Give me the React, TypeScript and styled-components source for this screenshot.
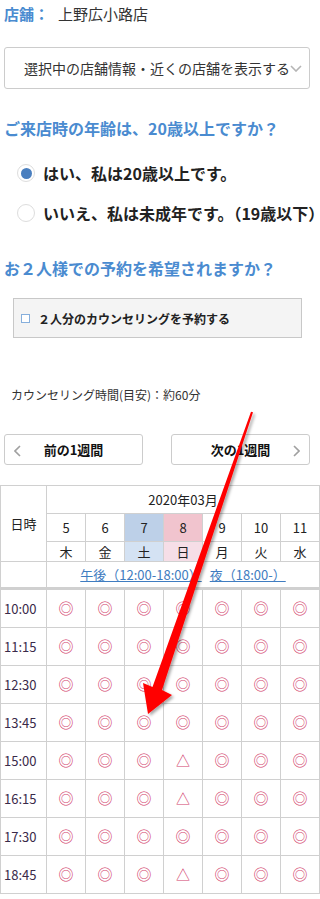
import React from "react";
import styled, { createGlobalStyle } from "styled-components";

const GlobalStyle = createGlobalStyle`
  html, body {
    margin: 0;
    padding: 0;
    background: #fff;
    overflow-x: hidden;
  }
  body {
    font-family: "Noto Sans CJK JP", "Noto Sans", sans-serif;
    color: #333;
  }
`;

const Page = styled.div`
  position: relative;
  width: 320px;
  overflow: hidden;
  padding-bottom: 4px;
`;

const StoreLine = styled.div`
  margin: 4px 0 0 4px;
  font-size: 15px;
  line-height: 20px;
  display: flex;
  gap: 9px;
`;

const StoreLabel = styled.span`
  color: #4a8bd0;
  font-weight: bold;
`;

const StoreName = styled.span`
  color: #333;
`;

const SelectBox = styled.div`
  margin: 23px 0 0 4px;
  width: 306px;
  height: 42px;
  box-sizing: border-box;
  border: 1px solid #ccc;
  border-radius: 3px;
  display: flex;
  align-items: center;
  padding-left: 19px;
  font-size: 14px;
  color: #333;
  white-space: nowrap;
`;

const Question = styled.h2<{ $top: number }>`
  margin: ${(p) => p.$top}px 0 0 4px;
  font-size: 16px;
  line-height: 24px;
  font-weight: bold;
  color: #4a8bd0;
  white-space: nowrap;
`;

const RadioList = styled.div`
  margin: 21px 0 0 17px;
  display: flex;
  flex-direction: column;
  gap: 16px;
`;

const RadioRow = styled.label`
  display: flex;
  align-items: center;
  gap: 8px;
  height: 24px;
  font-size: 16px;
  font-weight: bold;
  color: #222;
  white-space: nowrap;
`;

const RadioDot = styled.span<{ $checked?: boolean }>`
  flex: none;
  width: 18px;
  height: 18px;
  box-sizing: border-box;
  border-radius: 50%;
  border: 1px solid #ddd;
  background: #fff;
  display: flex;
  align-items: center;
  justify-content: center;
  &::after {
    content: "";
    width: 11px;
    height: 11px;
    border-radius: 50%;
    background: ${(p) => (p.$checked ? "#4a7fbf" : "transparent")};
  }
`;

const CheckPanel = styled.div`
  margin: 18px 0 0 13px;
  width: 289px;
  height: 40px;
  box-sizing: border-box;
  border: 1px solid #c8c8c8;
  background: #f4f4f4;
  display: flex;
  align-items: center;
  padding-left: 7px;
  gap: 8px;
  font-size: 12px;
  font-weight: bold;
  color: #222;
`;

const CheckSquare = styled.span`
  width: 9px;
  height: 9px;
  box-sizing: border-box;
  border: 1px solid #86afdc;
  background: #fff;
`;

const Duration = styled.p`
  margin: 48px 0 0 11px;
  font-size: 12px;
  line-height: 18px;
  color: #333;
`;

const WeekNav = styled.div`
  margin: 30px 10px 0 4px;
  display: flex;
  justify-content: space-between;
`;

const WeekButton = styled.button<{ $dir: "prev" | "next" }>`
  position: relative;
  width: 139px;
  height: 31px;
  box-sizing: border-box;
  border: 1px solid #ccc;
  border-radius: 3px;
  background: #fff;
  font-family: inherit;
  font-size: 13px;
  font-weight: bold;
  color: #111;
  padding: 0;
  display: flex;
  align-items: center;
  justify-content: center;
  svg {
    position: absolute;
    top: 10px;
    ${(p) => (p.$dir === "prev" ? "left: 9px;" : "right: 9px;")}
  }
`;

const Calendar = styled.table`
  margin-top: 20px;
  width: 320px;
  border-collapse: collapse;
  table-layout: fixed;
  font-size: 13px;
  color: #222;
`;

const Cell = styled.td<{ $bg?: string; $h: number }>`
  border: 1px solid #d0d0d0;
  height: ${(p) => p.$h}px;
  padding: 0;
  text-align: center;
  vertical-align: middle;
  background: ${(p) => p.$bg || "#fff"};
  line-height: 16px;
`;

const LinkRowCell = styled(Cell)`
  border-bottom: 3px solid #d0d0d0;
`;

const PeriodLink = styled.a`
  color: #3f7cc0;
  text-decoration: underline;
  margin: 0 4px;
`;

const TimeCell = styled(Cell)`
  text-align: left;
  padding-left: 3px;
  color: #3a2a4a;
`;

const Mark = styled.span<{ $tri?: boolean }>`
  color: #d2406c;
  font-size: ${(p) => (p.$tri ? "14px" : "15px")};
`;

const ArrowLayer = styled.svg`
  position: absolute;
  left: 0;
  top: 0;
  pointer-events: none;
`;

const days = [
  { d: "5", w: "木" },
  { d: "6", w: "金" },
  { d: "7", w: "土", bg: "#bdd0e8", wbg: "#d4e2f3" },
  { d: "8", w: "日", bg: "#f1c4ce", wbg: "#f6dee7" },
  { d: "9", w: "月" },
  { d: "10", w: "火" },
  { d: "11", w: "水" },
];

const times = ["10:00", "11:15", "12:30", "13:45", "15:00", "16:15", "17:30", "18:45"];
const limited = ["15:00", "16:15", "18:45"];

const Chevron = ({ dir }: { dir: "left" | "right" | "down" }) => {
  const d =
    dir === "left" ? "M6 1 L1 6 L6 11" : dir === "right" ? "M1 1 L6 6 L1 11" : "M1 1 L6 6 L11 1";
  const w = dir === "down" ? 12 : 7;
  const h = dir === "down" ? 7 : 12;
  return (
    <svg width={w} height={h} viewBox={`0 0 ${w} ${h}`}>
      <path d={d} fill="none" stroke={dir === "down" ? "#b5b5b5" : "#a0a0a0"} strokeWidth="1.6" />
    </svg>
  );
};

export default function App() {
  return (
    <Page>
      <GlobalStyle />
      <StoreLine>
        <StoreLabel>店舗：</StoreLabel>
        <StoreName>上野広小路店</StoreName>
      </StoreLine>

      <SelectBox>
        選択中の店舗情報・近くの店舗を表示する
        <Chevron dir="down" />
      </SelectBox>

      <Question $top={27}>ご来店時の年齢は、20歳以上ですか？</Question>
      <RadioList>
        <RadioRow>
          <RadioDot $checked />
          はい、私は20歳以上です。
        </RadioRow>
        <RadioRow>
          <RadioDot />
          いいえ、私は未成年です。（19歳以下）
        </RadioRow>
      </RadioList>

      <Question $top={31}>お２人様での予約を希望されますか？</Question>
      <CheckPanel>
        <CheckSquare />
        ２人分のカウンセリングを予約する
      </CheckPanel>

      <Duration>カウンセリング時間(目安)：約60分</Duration>

      <WeekNav>
        <WeekButton $dir="prev">
          <Chevron dir="left" />
          前の1週間
        </WeekButton>
        <WeekButton $dir="next">
          次の1週間
          <Chevron dir="right" />
        </WeekButton>
      </WeekNav>

      <Calendar>
        <colgroup>
          <col style={{ width: 46 }} />
          {days.map((d) => (
            <col key={d.d} />
          ))}
        </colgroup>
        <thead>
          <tr>
            <Cell as="th" rowSpan={3} $h={27} style={{ fontWeight: "normal" }}>
              日時
            </Cell>
            <Cell as="th" colSpan={7} $h={27} style={{ fontWeight: "normal" }}>
              2020年03月
            </Cell>
          </tr>
          <tr>
            {days.map((d) => (
              <Cell key={d.d} $h={27} $bg={d.bg}>
                {d.d}
              </Cell>
            ))}
          </tr>
          <tr>
            {days.map((d) => (
              <Cell key={d.w} $h={19} $bg={d.wbg}>
                {d.w}
              </Cell>
            ))}
          </tr>
          <tr>
            <LinkRowCell $h={25} />
            <LinkRowCell colSpan={7} $h={25}>
              <PeriodLink href="#pm">午後（12:00-18:00）</PeriodLink>
              <PeriodLink href="#night">夜（18:00-）</PeriodLink>
            </LinkRowCell>
          </tr>
        </thead>
        <tbody>
          {times.map((t) => (
            <tr key={t}>
              <TimeCell $h={37}>{t}</TimeCell>
              {days.map((d, i) => {
                const tri = i === 3 && limited.includes(t);
                return (
                  <Cell key={d.d} $h={37}>
                    <Mark $tri={tri}>{tri ? "△" : "◎"}</Mark>
                  </Cell>
                );
              })}
            </tr>
          ))}
        </tbody>
      </Calendar>

      <ArrowLayer width="320" height="899" viewBox="0 0 320 899">
        <defs>
          <filter id="arrowShadow" x="-20%" y="-5%" width="140%" height="110%">
            <feDropShadow dx="2" dy="2" stdDeviation="1.5" floodColor="#000" floodOpacity="0.35" />
          </filter>
        </defs>
        <polygon
          filter="url(#arrowShadow)"
          fill="#ff0000"
          points="251,411.7 253,412.3 162,690 172,695 148,714 143,683 152.5,687"
        />
      </ArrowLayer>
    </Page>
  );
}
